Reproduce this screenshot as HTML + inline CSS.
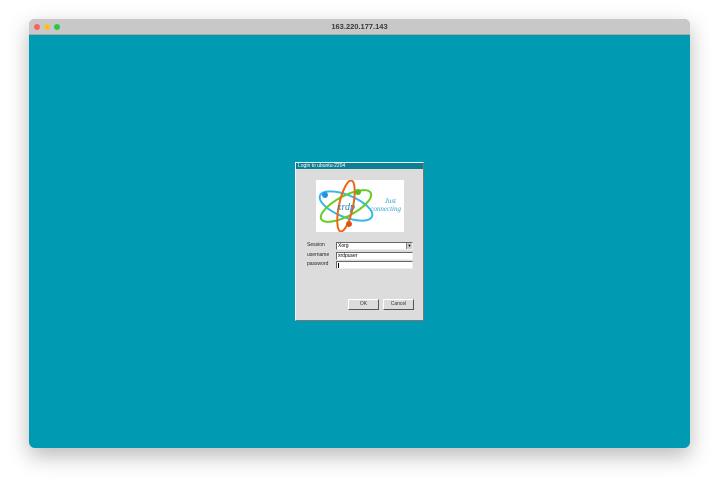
<!DOCTYPE html>
<html><head><meta charset="utf-8"><style>
*{margin:0;padding:0;box-sizing:border-box}
body{width:720px;height:488px;background:#fff;position:relative;overflow:hidden;font-family:"Liberation Sans",sans-serif}
.win{position:absolute;left:29px;top:19px;width:661px;height:429px;border-radius:6px;overflow:hidden;background:#009ab3;box-shadow:0 8px 22px rgba(0,0,0,0.28)}
.tb{height:16px;background:#c8c8c8;border-bottom:1px solid #a9a9a9;text-align:center;font-size:7.5px;font-weight:bold;color:#3a3a3a;line-height:16px}
.dot{position:absolute;top:5px;width:6px;height:6px;border-radius:50%}
.dlg{position:absolute;left:266px;top:143px;width:129px;height:159px;background:#dcdcdc;border:1px solid #f4f4f4;border-right-color:#777;border-bottom-color:#777}
.dt{height:6px;background:#0c7f95;color:#fff;font-size:5px;line-height:6px;padding-left:2px;white-space:nowrap}
.logo{position:absolute;left:20px;top:17px;width:88px;height:52px;background:#fff}
.lbl{position:absolute;left:11px;font-size:5px;color:#222}
.fld{position:absolute;left:40px;width:77px;height:8px;background:#fff;border:1px solid #666;border-right-color:#eee;border-bottom-color:#eee;font-size:5px;line-height:6px;padding-left:1px}
.btn{position:absolute;top:136px;width:31px;height:11px;background:#dcdcdc;border:1px solid #fff;border-right-color:#555;border-bottom-color:#555;font-size:5px;text-align:center;line-height:9px;color:#333}
</style></head><body>
<div class="win">
<div class="tb">163.220.177.143</div>
<div class="dot" style="left:5px;background:#fe5f57"></div>
<div class="dot" style="left:15px;background:#febc2e"></div>
<div class="dot" style="left:25px;background:#28c840"></div>
<div class="dlg">
<div class="dt">Login to ubuntu-2204</div>
<div class="logo">
<svg width="88" height="52" viewBox="0 0 88 52">
<ellipse cx="30" cy="26" rx="28" ry="11" fill="none" stroke="#36b8e8" stroke-width="2" transform="rotate(22 30 26)"/>
<ellipse cx="30" cy="26" rx="28" ry="10" fill="none" stroke="#66cc22" stroke-width="2" transform="rotate(-28 30 26)"/>
<ellipse cx="30" cy="26" rx="7" ry="26" fill="none" stroke="#ee6611" stroke-width="2" transform="rotate(12 30 26)"/>
<circle cx="9" cy="15" r="3" fill="#2a8ee0"/>
<circle cx="42" cy="12" r="3" fill="#55bb22"/>
<circle cx="33" cy="44" r="3" fill="#dd5511"/>
<text x="30" y="30" font-size="10" font-style="italic" fill="#2a7fb8" text-anchor="middle" font-family="Liberation Serif,serif">xrdp</text>
<text x="80" y="23" font-size="7" font-style="italic" fill="#2aa7c8" text-anchor="end" font-family="Liberation Serif,serif">Just</text>
<text x="85" y="31" font-size="7" font-style="italic" fill="#2aa7c8" text-anchor="end" font-family="Liberation Serif,serif">connecting</text>
</svg></div>
<div class="lbl" style="top:79px">Session</div>
<div class="lbl" style="top:89px">username</div>
<div class="lbl" style="top:98px">password</div>
<div class="fld" style="top:79px">Xorg<span style="position:absolute;right:0;top:0;width:6px;height:6px;background:#ccc;border-left:1px solid #888;font-size:4px;text-align:center">▼</span></div>
<div class="fld" style="top:89px">xrdpuser</div>
<div class="fld" style="top:98px"><span style="display:inline-block;width:1px;height:5px;background:#000;margin-top:1px"></span></div>
<div class="btn" style="left:52px">OK</div>
<div class="btn" style="left:87px">Cancel</div>
</div>
</div>
</body></html>
